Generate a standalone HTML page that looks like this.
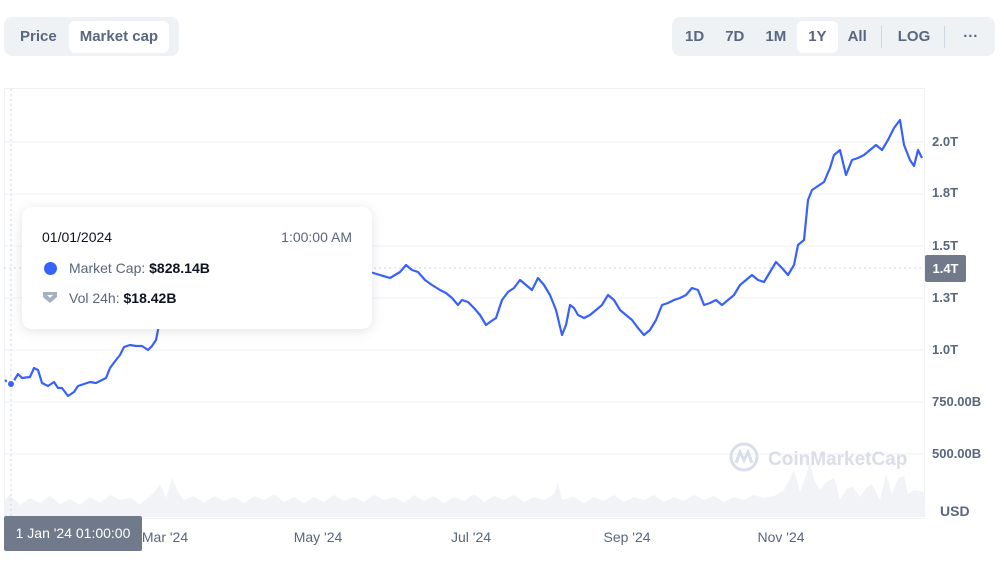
<!DOCTYPE html>
<html><head><meta charset="utf-8"><style>
body{margin:0;width:1004px;height:574px;background:#fff;font-family:"Liberation Sans",sans-serif;position:relative;overflow:hidden}
.seg{position:absolute;background:#eff2f5;border-radius:8px;display:flex;align-items:center;padding:0 4px;box-sizing:border-box}
.seg div{font-size:15px;color:#58667e;font-weight:600;padding:0 12px;height:32px;line-height:32px;border-radius:6px}
.seg .on{background:#fff}
.yl{position:absolute;left:932px;font-size:13px;color:#58667e;font-weight:600}
.xl{position:absolute;top:529px;font-size:14px;color:#58667e;transform:translateX(-50%)}
</style></head><body>
<div class="seg" style="left:4px;top:17px;width:175px;height:39px">
<div style="padding:0 12px 0 12px">Price</div><div class="on" style="padding:0 11px">Market cap</div></div>
<div class="seg" style="left:672px;top:17px;width:323px;height:39px;padding:0 2px">
<div style="padding:0 11px">1D</div><div style="padding:0 10px">7D</div><div style="padding:0 11px">1M</div><div class="on" style="padding:0 11px">1Y</div><div style="padding:0 10px">All</div>
<span style="width:1px;height:22px;background:#cfd6e4;margin:0 6px 0 4px"></span><div style="padding:0 10px">LOG</div>
<span style="width:1px;height:22px;background:#cfd6e4;margin:0 10px 0 4px"></span><div style="padding:0 8px">···</div></div>

<svg style="position:absolute;left:0;top:0" width="1004" height="574">
<rect x="4.5" y="88.5" width="920" height="430" fill="none" stroke="#eff2f5"/>
<g stroke="#eff2f5">
<line x1="4" x2="924" y1="142" y2="142"/><line x1="4" x2="924" y1="194" y2="194"/>
<line x1="4" x2="924" y1="246" y2="246"/><line x1="4" x2="924" y1="298" y2="298"/>
<line x1="4" x2="924" y1="350" y2="350"/><line x1="4" x2="924" y1="402" y2="402"/>
<line x1="4" x2="924" y1="454" y2="454"/></g>
<polygon fill="#f1f3f6" points="4,517 4,500 10,495 20,505 30,498 40,503 50,496 60,504 70,499 80,505 90,497 100,503 110,495 120,500 130,498 140,504 150,496 156,490 160,484 166,498 172,478 178,492 184,500 194,496 204,503 214,496 224,501 234,497 244,503 254,496 264,500 274,494 284,502 294,497 304,503 314,497 324,502 334,495 344,501 354,497 364,502 374,495 384,500 394,497 404,503 414,495 424,501 434,496 444,503 454,497 464,501 474,494 484,502 494,496 504,500 514,495 524,502 534,497 544,500 554,494 558,482 562,500 574,497 584,503 594,497 604,501 614,495 624,502 634,497 644,500 654,495 664,502 674,497 684,501 694,495 704,500 714,496 724,502 734,497 744,500 754,495 764,498 774,496 784,490 794,470 800,492 806,475 810,462 814,480 820,490 826,482 834,478 840,500 846,490 852,486 860,497 866,488 872,484 880,500 886,474 892,494 898,478 904,476 908,494 914,490 924,492 924,517"/>
<line x1="11" x2="11" y1="89" y2="517" stroke="#cfd6e4" stroke-dasharray="2,3"/>
<line x1="4" x2="924" y1="268" y2="268" stroke="#cfd6e4" stroke-dasharray="2,3"/>
<g opacity="0.9"><circle cx="744" cy="457" r="13" fill="none" stroke="#d5dbe7" stroke-width="3"/>
<path d="M736 463 L740 452 L744 460 L748 452 L752 463" fill="none" stroke="#d5dbe7" stroke-width="3"/>
<text x="768" y="465" font-size="19" font-weight="700" fill="#d5dbe7" font-family="Liberation Sans">CoinMarketCap</text></g>
<polyline fill="none" stroke="#3861fb" stroke-width="2.2" stroke-linejoin="round" points="5,380 8,383 12,384 18,374 22,378 30,377 34,368 38,370 42,383 48,386 54,382 58,388 62,388 68,396 74,392 78,386 84,384 90,382 96,383 102,380 106,378 110,368 116,360 120,355 124,347 130,345 136,346 142,346 148,350 152,346 156,340 160,320 165,300 170,290 180,280 200,275 230,270 260,272 290,275 320,272 350,268 370,272 380,275 390,278 400,272 406,265 412,270 418,272 425,280 432,285 440,290 446,293 452,298 458,305 462,300 468,302 474,308 480,315 486,325 490,322 496,318 502,300 508,292 514,288 520,280 526,285 532,290 538,278 544,285 550,295 556,310 562,335 566,325 570,305 574,308 578,315 584,318 590,315 596,310 602,305 608,295 614,300 620,310 626,315 632,320 638,328 644,335 650,330 656,320 662,305 668,303 674,300 680,298 686,295 692,288 698,290 704,305 710,303 716,300 722,305 728,300 734,295 740,285 746,280 752,275 758,280 764,282 770,272 776,262 782,268 788,275 794,265 798,245 804,240 808,200 812,190 818,186 824,182 830,168 834,155 840,150 846,175 852,160 858,158 864,155 870,150 876,145 882,150 888,140 894,128 900,120 904,145 910,160 914,166 918,150 922,158"/>
<circle cx="11" cy="384" r="4" fill="#3861fb" stroke="#fff" stroke-width="2"/>
</svg>

<div class="yl" style="top:134px">2.0T</div><div class="yl" style="top:185px">1.8T</div>
<div class="yl" style="top:238px">1.5T</div><div class="yl" style="top:290px">1.3T</div>
<div class="yl" style="top:342px">1.0T</div><div class="yl" style="top:394px">750.00B</div>
<div class="yl" style="top:446px">500.00B</div>
<div class="yl" style="top:503px;left:940px;font-size:14px;font-weight:700">USD</div>
<div style="position:absolute;left:925px;top:255px;width:41px;height:27px;background:#707a8a;color:#fff;font-size:13px;font-weight:700;line-height:27px;text-align:center;border-radius:2px">1.4T</div>

<div class="xl" style="left:165px">Mar '24</div><div class="xl" style="left:318px">May '24</div>
<div class="xl" style="left:471px">Jul '24</div><div class="xl" style="left:627px">Sep '24</div>
<div class="xl" style="left:781px">Nov '24</div>
<div style="position:absolute;left:4px;top:516px;width:138px;height:35px;background:#707a8a;color:#fff;font-size:14px;line-height:35px;text-align:center;border-radius:2px">1 Jan '24 01:00:00</div>

<div style="position:absolute;left:22px;top:207px;width:350px;height:122px;background:#fff;border-radius:10px;box-shadow:0 2px 12px rgba(88,102,126,0.18)">
<div style="position:absolute;left:20px;top:22px;font-size:14px;color:#0d1421">01/01/2024</div>
<div style="position:absolute;right:20px;top:22px;font-size:14px;color:#58667e">1:00:00 AM</div>
<div style="position:absolute;left:22px;top:55px;width:13px;height:13px;border-radius:50%;background:#3861fb"></div>
<div style="position:absolute;left:47px;top:53px;font-size:14px;color:#58667e">Market Cap: <b style="color:#0d1421">$828.14B</b></div>
<svg style="position:absolute;left:19px;top:82px" width="18" height="16"><path d="M2 3 H16 V8 L9 14 L2 8 Z" fill="#a6b0c3"/><path d="M6 6 H12 L9 9 Z" fill="#fff"/></svg>
<div style="position:absolute;left:47px;top:83px;font-size:14px;color:#58667e">Vol 24h: <b style="color:#0d1421">$18.42B</b></div>
</div>
</body></html>
